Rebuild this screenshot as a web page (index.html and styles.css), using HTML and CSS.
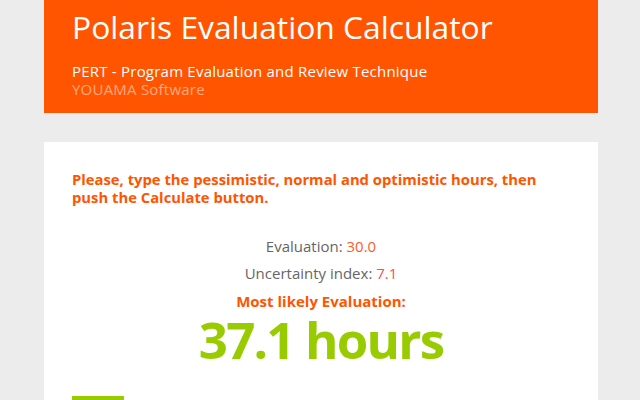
FILE: index.html
```html
<!DOCTYPE html>
<html>
<head>
<meta charset="utf-8">
<link rel="stylesheet" href="styles.css">
</head>
<body>
<div class="page">
  <header class="hero">
    <h1 class="title">Polaris Evaluation Calculator</h1>
    <p class="subtitle">PERT - Program Evaluation and Review Technique</p>
    <p class="brand">YOUAMA Software</p>
  </header>
  <main class="card">
    <p class="intro">Please, type the pessimistic, normal and optimistic hours, then push the Calculate button.</p>
    <div class="results">
      <p class="line">Evaluation: <span class="val">30.0</span></p>
      <p class="line">Uncertainty index: <span class="val val-alt">7.1</span></p>
      <p class="likely">Most likely Evaluation:</p>
      <p class="big">37.1 hours</p>
    </div>
    <div class="bar"></div>
  </main>
</div>
</body>
</html>
```
FILE: styles.css
```css
html, body {
  margin: 0;
  padding: 0;
  background: #ececec;
  font-family: "Open Sans", "Liberation Sans", sans-serif;
}
.page {
  width: 554px;
  margin-left: 44px;
}
.hero {
  background: #ff5500;
  color: #ffffff;
  padding: 7px 28px 0 28px;
  height: 106px;
}
.title {
  margin: 0;
  font-size: 31.8px;
  font-weight: 400;
  line-height: 40px;
}
.subtitle {
  margin: 15px 0 0 0;
  font-size: 15px;
  line-height: 18px;
  letter-spacing: 0.22px;
}
.brand {
  margin: 0;
  font-size: 15px;
  line-height: 18px;
  letter-spacing: 0.22px;
  color: #ffaa80;
}
.card {
  background: #ffffff;
  margin-top: 29px;
  padding: 28px 28px 0 28px;
  height: 230px;
}
.intro {
  margin: 0;
  color: #ff5500;
  font-weight: 700;
  font-size: 14.8px;
  line-height: 18px;
}
.results {
  text-align: center;
  margin-top: 31px;
}
.line {
  margin: 0 0 9px 0;
  color: #666666;
  font-size: 15px;
  line-height: 18px;
}
.val { color: #ff5a2a; }
.val-alt { color: #ff4d55; }
.likely {
  margin: 0;
  color: #ff5500;
  font-weight: 700;
  font-size: 15px;
  line-height: 20px;
}
.big {
  margin: 0;
  color: #99cc00;
  font-weight: 700;
  font-size: 51px;
  letter-spacing: -1.8px;
  line-height: 56px;
}
.bar {
  margin-top: 29px;
  width: 52px;
  height: 8px;
  background: #99cc00;
}
```
